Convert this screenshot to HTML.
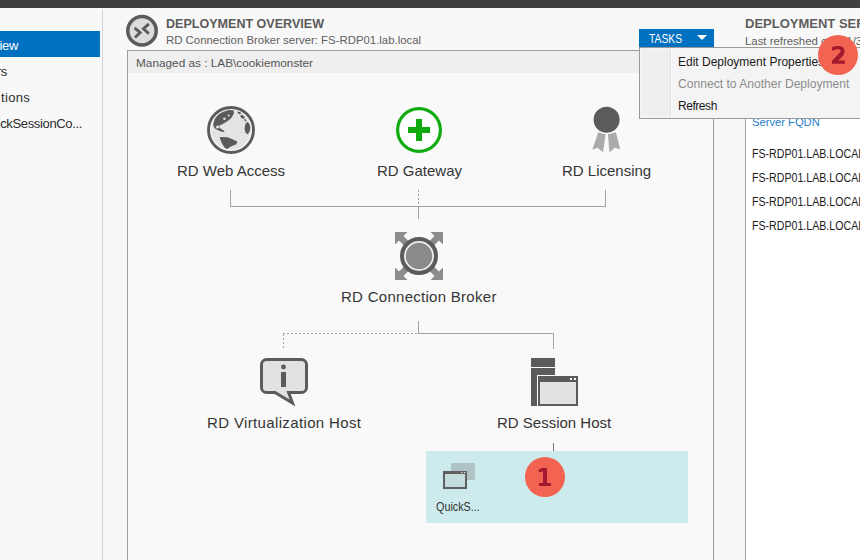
<!DOCTYPE html>
<html><head><meta charset="utf-8">
<style>
*{margin:0;padding:0;box-sizing:border-box}
html,body{width:860px;height:560px;overflow:hidden;background:#f8f8f8;font-family:"Liberation Sans",sans-serif;}
.a{position:absolute;white-space:nowrap}
#topbar{left:0;top:0;width:860px;height:8px;background:#3f3f3f}
#navline{left:102px;top:9px;width:1px;height:551px;background:#d2d2d2}
#navsel{left:0;top:31px;width:100px;height:26px;background:#0070c0}
.nav{font-size:13px;letter-spacing:-0.35px;color:#2b2b2b}
.lbl{font-size:15px;color:#353535}
#panel{left:127px;top:50px;width:587px;height:520px;border:1px solid #9e9e9e;background:#f9f9f9}
#strip{left:128px;top:51px;width:585px;height:22px;background:#efefef}
#right{left:745px;top:50px;width:115px;height:510px;border-left:1px solid #9e9e9e;background:#fff}
#tasks{left:639px;top:29px;width:75px;height:18px;background:#0070c0}
#menu{left:639px;top:47px;width:240px;height:72px;border:1px solid #9a9a9a;background:#f4f4f4}
#gutter{left:641px;top:49px;width:29px;height:67px;background:#efefef}
#gsep{left:670px;top:49px;width:2px;height:67px;border-left:1px solid #e0e0e0;background:#fcfcfc}
#coll{left:426px;top:451px;width:262px;height:72px;background:#cdebed}
.badge{width:40px;height:40px;border-radius:50%;background:#f26451}
</style></head><body>
<div class="a" id="topbar"></div>
<div class="a" id="navline"></div>
<div class="a" id="navsel"></div>
<div class="a nav" style="right:842px;top:38px;color:#fff">Overview</div>
<div class="a nav" style="right:853px;top:64px">Servers</div>
<div class="a nav" style="right:830px;top:90px;letter-spacing:0.3px">tions</div>
<div class="a nav" style="right:778px;top:116px">QuickSessionCo...</div>

<div class="a" id="panel"></div>
<div class="a" id="strip"></div>
<div class="a" style="left:136px;top:56px;font-size:11.8px;color:#555">Managed as : LAB\cookiemonster</div>

<div class="a" style="left:166px;top:16px;font-size:13px;font-weight:bold;color:#5a5a5a;transform:scaleX(0.965);transform-origin:0 0">DEPLOYMENT OVERVIEW</div>
<div class="a" style="left:166px;top:34px;font-size:11.4px;color:#5e5e5e">RD Connection Broker server: FS-RDP01.lab.local</div>

<div class="a" id="right"></div>
<div class="a" style="left:745px;top:16px;font-size:13px;font-weight:bold;color:#5e5e5e">DEPLOYMENT SERVERS</div>
<div class="a" style="left:745px;top:35px;font-size:11.4px;color:#5e5e5e">Last refreshed on <span style="margin-left:4px">11/30/2018</span></div>
<div class="a" style="left:752px;top:116px;font-size:11.2px;color:#1f80cc">Server FQDN</div>
<div class="a" style="left:752px;top:147px;font-size:12px;color:#1c1c1c;transform:scaleX(0.885);transform-origin:0 0">FS-RDP01.LAB.LOCAL</div>
<div class="a" style="left:752px;top:171px;font-size:12px;color:#1c1c1c;transform:scaleX(0.885);transform-origin:0 0">FS-RDP01.LAB.LOCAL</div>
<div class="a" style="left:752px;top:195px;font-size:12px;color:#1c1c1c;transform:scaleX(0.885);transform-origin:0 0">FS-RDP01.LAB.LOCAL</div>
<div class="a" style="left:752px;top:219px;font-size:12px;color:#1c1c1c;transform:scaleX(0.885);transform-origin:0 0">FS-RDP01.LAB.LOCAL</div>

<div class="a" id="coll"></div>

<svg class="a" style="left:0;top:0" width="860" height="560" viewBox="0 0 860 560">
  <!-- header icon -->
  <circle cx="142" cy="30.7" r="14.2" fill="#dcdcdc" stroke="#5b5b5b" stroke-width="3.5"/>
  <path d="M134.6 27.9 L140.2 32.6 L135 37.5 M148.9 23.9 L143.4 28.8 L148.9 33.6" fill="none" stroke="#5b5b5b" stroke-width="2.8"/>
  <!-- connectors -->
  <g stroke="#a3a3a3" stroke-width="1" fill="none" shape-rendering="crispEdges">
    <path d="M230.5 190 V206.5 H605.5 V190"/>
    <path d="M418.5 190 V206" stroke-dasharray="2 2"/>
    <path d="M418.5 207 V219"/>
    <path d="M418.5 321 V333.5 H553.5 V349"/>
    <path d="M283 333.5 H418" stroke-dasharray="2 2"/>
    <path d="M283.5 334 V349" stroke-dasharray="2 2"/>
    <path d="M553.5 443 V451" stroke="#777"/>
  </g>
  <!-- globe -->
  <g transform="translate(207,106)">
    <circle cx="24" cy="24" r="22.5" fill="#f3f3f3" stroke="#5b5b5b" stroke-width="2.9"/>
    <circle cx="24" cy="24" r="19.6" fill="#e4e4e4"/>
    <path d="M26.8 4.5 L21.8 4.1 L15.5 5.9 L11.1 8.8 L8 12.6 L6.3 17.5 L6.6 20.5 L8.5 23 L11.1 24.3 L14 25.5 L17 26 L17.6 25 L15 23.6 L13 22.2 L11.9 19.8 L14.9 18.4 L19.2 15.9 L22 14 L24.2 12.1 L25.8 9.5 L26.9 7.5 Z" fill="#5b5b5b"/>
    <circle cx="10.6" cy="21" r="1.6" fill="#e4e4e4"/>
    <circle cx="17.4" cy="12.8" r="1.2" fill="#e4e4e4"/>
    <circle cx="21.7" cy="9.6" r="1" fill="#e4e4e4"/>
    <path d="M13 30.9 L20.5 31.3 L25.5 33.2 L30.3 35.6 L29.4 38.2 L24.4 40.2 L20 43 L17.4 41.6 L14.9 37.2 L13 32.8 Z" fill="#5b5b5b"/>
    <path d="M40.3 15.9 C42 16.5 43.3 19 43.3 21.4 C43.3 24.5 42 27.5 40.3 28.3 C38.5 27.5 37.7 25 37.7 22.3 C37.7 19.5 38.5 16.5 40.3 15.9 Z" fill="#5b5b5b"/>
    <path d="M30.3 5.6 L33 5.9 L34.6 7.4 L32.6 8.2 L30.8 7.2 Z M33.2 9.4 L35.6 9 L37.6 10.8 L37.3 12.8 L35.2 12.4 L33.6 11.2 Z M36.8 13.4 L38.6 13.2 L39.6 14.6 L38.4 15.4 Z" fill="#5b5b5b"/>
  </g>
  <!-- gateway -->
  <circle cx="419" cy="130" r="21.4" fill="#fff" stroke="#10ab10" stroke-width="3.2"/>
  <rect x="416" y="119" width="6" height="22" fill="#10ab10"/>
  <rect x="408" y="127" width="22" height="6" fill="#10ab10"/>
  <!-- licensing -->
  <path d="M598.2 132.2 L605.7 134.3 L603 152.5 L597.7 147.7 L592.3 149.8 Z" fill="#ababab"/>
  <path d="M607.9 134.3 L615.9 132.2 L620.2 149.3 L614.8 147.7 L609.5 152.5 Z" fill="#ababab"/>
  <circle cx="606.6" cy="119.7" r="14.3" fill="#f9f9f9"/>
  <circle cx="606.6" cy="119.7" r="13" fill="#5b5b5b"/>
  <!-- broker -->
  <g transform="translate(395,232)" fill="#8c8c8c">
    <path d="M0 0 H12.5 L8.5 4 L14 9.5 L9.5 14 L4 8.5 L0 12.5 Z"/>
    <path d="M48 0 H35.5 L39.5 4 L34 9.5 L38.5 14 L44 8.5 L48 12.5 Z"/>
    <path d="M0 48 H12.5 L8.5 44 L14 38.5 L9.5 34 L4 39.5 L0 35.5 Z"/>
    <path d="M48 48 H35.5 L39.5 44 L34 38.5 L38.5 34 L44 39.5 L48 35.5 Z"/>
  </g>
  <circle cx="419" cy="256" r="17" fill="#ececec" stroke="#5b5b5b" stroke-width="4"/>
  <circle cx="419" cy="256" r="13.2" fill="#8a8a8a"/>
  <!-- virtualization -->
  <path d="M266.5 359.5 H301.5 A5 5 0 0 1 306.5 364.5 V387.5 A5 5 0 0 1 301.5 392.5 H288.6 L292.5 403 L275 392.5 H266.5 A5 5 0 0 1 261.5 387.5 V364.5 A5 5 0 0 1 266.5 359.5 Z" fill="#e2e2e2" stroke="#5b5b5b" stroke-width="3" stroke-linejoin="miter"/>
  <circle cx="283.5" cy="367" r="2.4" fill="#5b5b5b"/>
  <rect x="281" y="372" width="5" height="15" fill="#5b5b5b"/>
  <!-- session host -->
  <rect x="531" y="358" width="24" height="9" fill="#5b5b5b"/>
  <rect x="531" y="368" width="24" height="38" fill="#5b5b5b"/>
  <rect x="537" y="375" width="42" height="32" fill="#f9f9f9"/>
  <rect x="538" y="376" width="40" height="30" fill="#5b5b5b"/>
  <rect x="540" y="382" width="36" height="22" fill="#e2e2e2"/>
  <rect x="570" y="378" width="2" height="2" fill="#fff"/>
  <rect x="574" y="378" width="2" height="2" fill="#fff"/>
  <!-- quick session -->
  <rect x="451" y="463" width="24" height="17" rx="1" fill="#b0c3c4"/>
    <rect x="444" y="472" width="22" height="16" fill="#c5dcdd" stroke="#5f5f5f" stroke-width="2"/>
  <rect x="443" y="471" width="24" height="3" fill="#5f5f5f"/>
  <rect x="461" y="472" width="1.5" height="1" fill="#ddd"/>
  <rect x="464" y="472" width="1.5" height="1" fill="#ddd"/>
</svg>

<div class="a lbl" style="left:177px;top:162px">RD Web Access</div>
<div class="a lbl" style="left:377px;top:162px">RD Gateway</div>
<div class="a lbl" style="left:562px;top:162px">RD Licensing</div>
<div class="a lbl" style="left:341px;top:288px;letter-spacing:0.28px">RD Connection Broker</div>
<div class="a lbl" style="left:207px;top:414px;letter-spacing:0.36px">RD Virtualization Host</div>
<div class="a lbl" style="left:497px;top:414px">RD Session Host</div>
<div class="a" style="left:436px;top:500px;font-size:12px;color:#333;transform:scaleX(0.9);transform-origin:0 0">QuickS...</div>

<div class="a badge" style="left:525px;top:457px"></div>
<svg class="a" style="left:525px;top:457px" width="40" height="40"><path d="M13.8 12.6 C15 11.6 16.5 11 18 11 H22 V26 H26 V29 H14 V26 H18 V14.6 C16.5 14.6 15 14.9 13.8 15.4 Z" fill="#a3192f"/></svg>

<!-- tasks + menu -->
<div class="a" id="tasks"></div>
<div class="a" style="left:649px;top:32px;font-size:12px;color:#fff;transform:scaleX(0.86);transform-origin:0 0">TASKS</div>
<svg class="a" style="left:697px;top:35px" width="10" height="6"><path d="M0 0 H10 L5 5 Z" fill="#fff"/></svg>
<div class="a" id="menu"></div>
<div class="a" id="gutter"></div>
<div class="a" id="gsep"></div>
<div class="a" style="left:678px;top:55px;font-size:12px;color:#1a1a1a">Edit Deployment Properties</div>
<div class="a" style="left:678px;top:77px;font-size:12.1px;color:#8c8c8c">Connect to Another Deployment</div>
<div class="a" style="left:678px;top:99px;font-size:12px;letter-spacing:-0.45px;color:#1a1a1a">Refresh</div>

<div class="a badge" style="left:818px;top:35px"></div>
<svg class="a" style="left:818px;top:35px" width="40" height="40"><path d="M14 12.3 C16 11.4 18 11 20.5 11 C24 11 26.6 13 26.6 16.3 C26.6 18.6 25.5 20.3 23.8 22 L20.2 25.6 H26.8 V28.8 H14 V25.8 L20.2 19.5 C21.6 18 22.6 17 22.6 15.8 C22.6 14.7 21.7 14.2 20.3 14.2 C18.3 14.2 16 14.9 14 15.8 Z" fill="#a3192f"/></svg>
</body></html>
